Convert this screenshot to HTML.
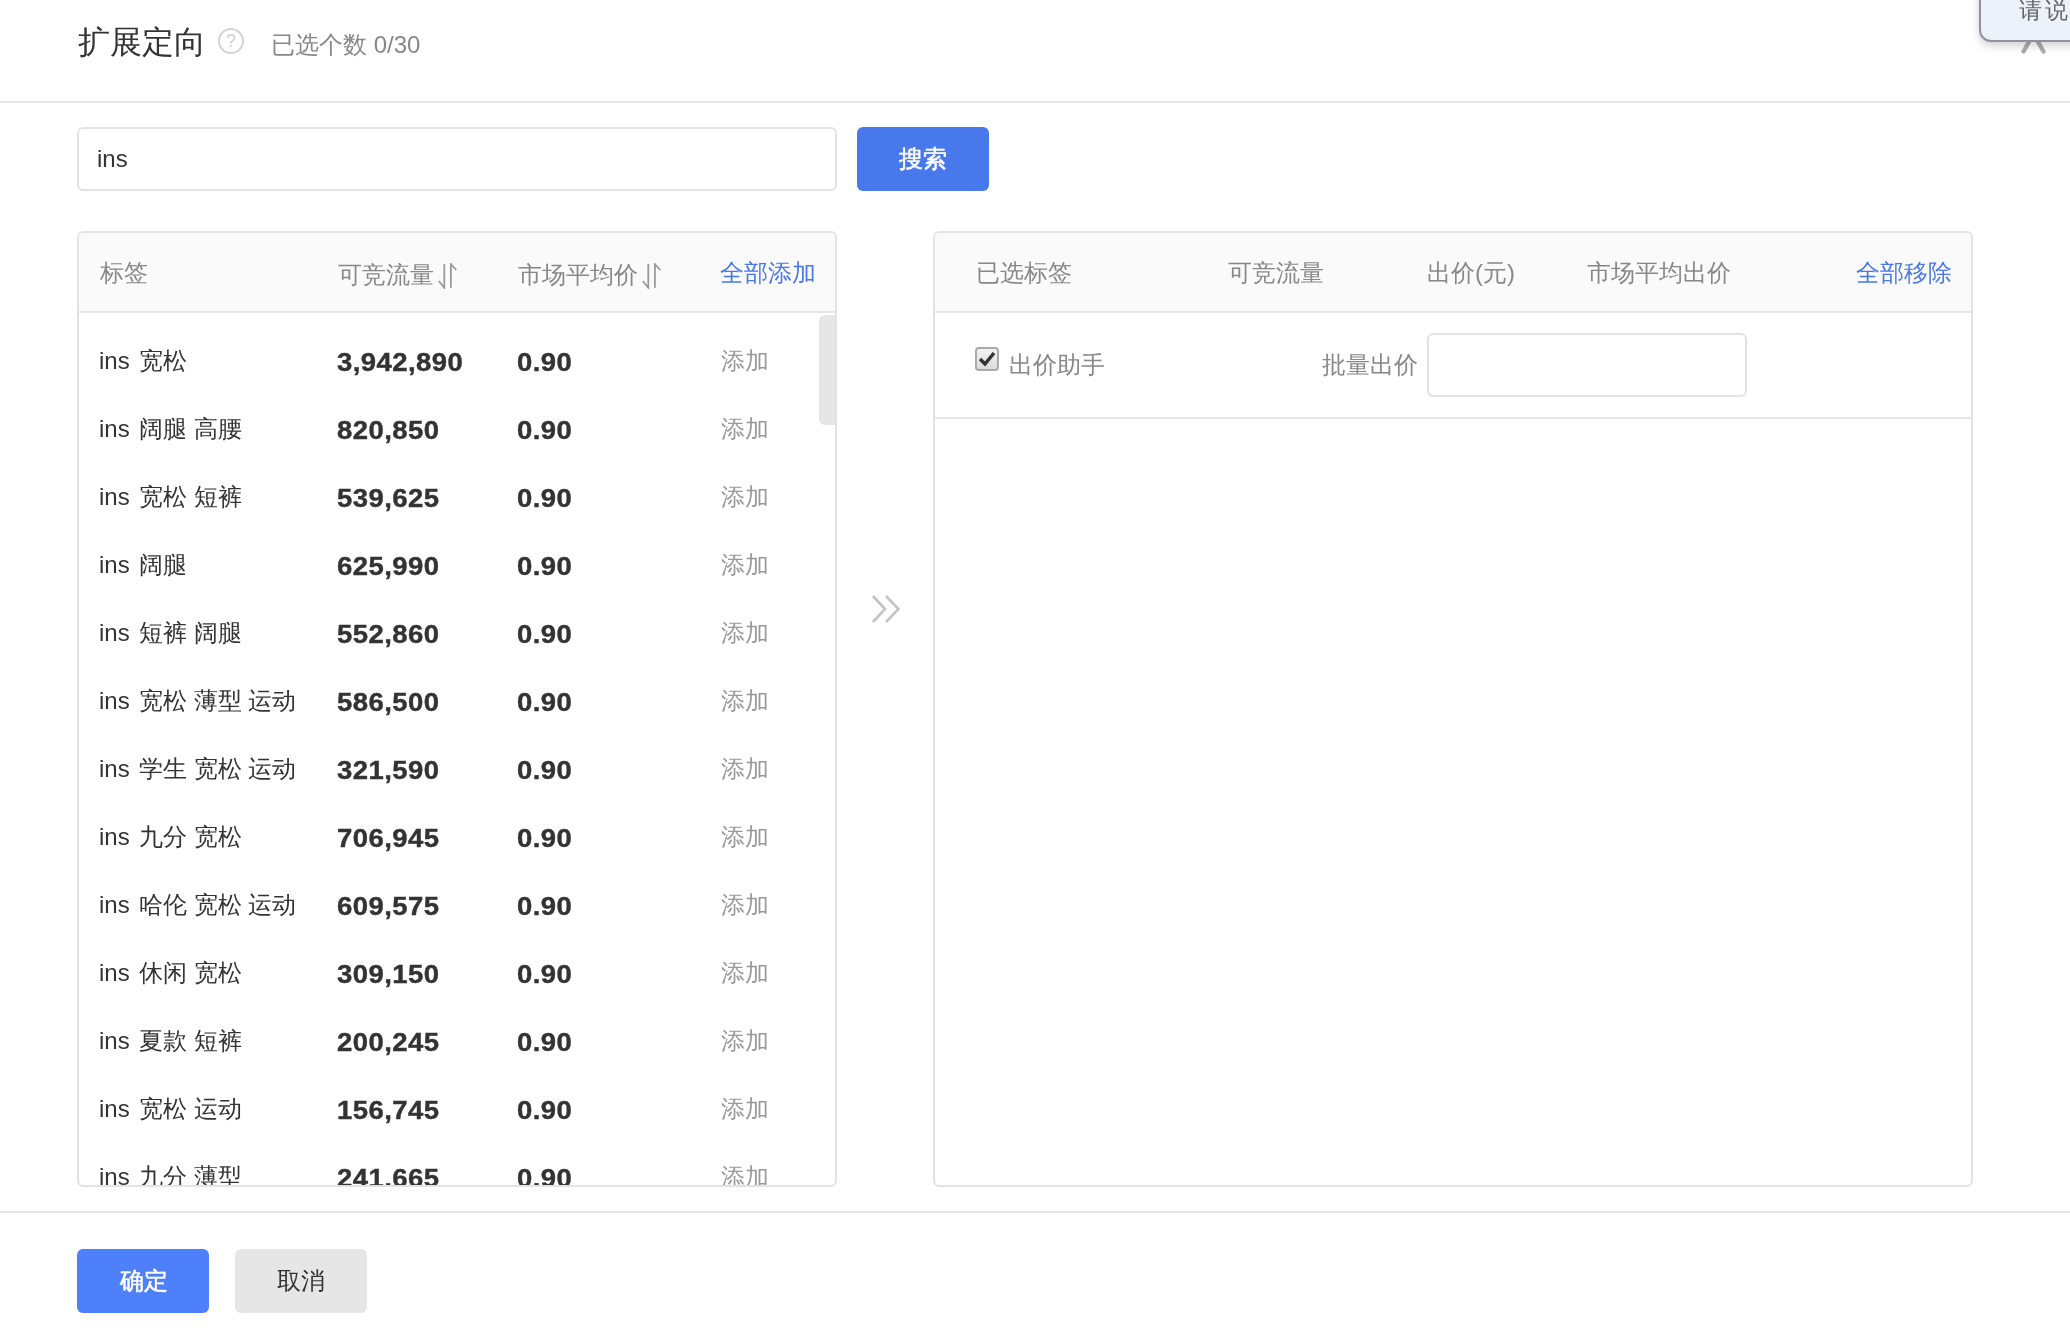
<!DOCTYPE html>
<html><head><meta charset="utf-8">
<style>
html,body{margin:0;padding:0;}
body{width:2070px;height:1328px;position:relative;overflow:hidden;background:#fff;font-family:"Liberation Sans",sans-serif;color:#333;}
.a{position:absolute;white-space:nowrap;line-height:1;}
.hr{position:absolute;left:0;width:2070px;height:2px;background:#e6e6e6;}
.box{position:absolute;box-sizing:border-box;border:2px solid #e3e3e3;border-radius:6px;}
.btn{position:absolute;box-sizing:border-box;border-radius:6px;text-align:center;font-size:24px;}
.panel{position:absolute;box-sizing:border-box;border:2px solid #e3e3e3;border-radius:6px;overflow:hidden;background:#fff;}
.phead{position:absolute;left:0;top:0;right:0;height:78px;background:#fafafa;border-bottom:2px solid #e6e6e6;}
.ph{position:absolute;top:28px;font-size:24px;line-height:1;color:#888;white-space:nowrap;}
.blue{color:#4a78e6;}
.row{position:absolute;left:0;right:0;height:68px;font-size:24px;line-height:1;white-space:nowrap;}
.row>span{position:absolute;top:3px;}
.w{font-style:normal;margin-right:2.5px;}
.c1{left:20px;color:#333;}
.c2{left:258px;}
.c3{left:438px;}
.c4{left:642px;color:#999;}
.num{font-weight:bold;font-size:25px;letter-spacing:0.4px;color:#333;top:4px !important;transform:scaleX(1.1);transform-origin:0 0;-webkit-text-stroke:0.4px #333;}
.sort{position:absolute;top:30px;width:20px;height:26px;}
.lay{will-change:transform;}</style></head><body><div class="lay" style="position:absolute;left:0;top:0;width:2070px;height:1328px;">

<div class="a" id="title" style="left:78px;top:26px;font-size:32px;color:#333;">扩展定向</div>
<div class="a" style="left:218px;top:28px;width:22px;height:22px;border:2px solid #d4d4d4;border-radius:50%;color:#ccc;font-size:18px;text-align:center;line-height:22px;">?</div>
<div class="a" style="left:271px;top:33px;font-size:24px;color:#888;">已选个数 0/30</div>

<div class="hr" style="top:101px;"></div>

<div class="box" style="left:77px;top:127px;width:760px;height:64px;"></div>
<div class="a" style="left:97px;top:147px;font-size:24px;color:#333;">ins</div>
<div class="btn" style="left:857px;top:127px;width:132px;height:64px;background:#4879ec;color:#fff;line-height:64px;-webkit-text-stroke:0.5px #fff;">搜索</div>

<!-- left panel -->
<div class="panel" style="left:77px;top:231px;width:760px;height:956px;">
  <div class="phead">
    <div class="ph" style="left:21px;">标签</div>
    <div class="ph" style="left:259px;top:30px;">可竞流量</div>
    <svg class="sort" style="left:359px;" viewBox="0 0 20 26"><path d="M6.3 1V24.8L0.8 18M12.9 24.8V1.2L18.3 7" fill="none" stroke="#9a9a9a" stroke-width="1.8"/></svg>
    <div class="ph" style="left:439px;top:30px;">市场平均价</div>
    <svg class="sort" style="left:563px;" viewBox="0 0 20 26"><path d="M6.3 1V24.8L0.8 18M12.9 24.8V1.2L18.3 7" fill="none" stroke="#9a9a9a" stroke-width="1.8"/></svg>
    <div class="ph blue" style="left:641px;top:28px;">全部添加</div>
  </div>
<div class="row" style="top:113px;"><span class="c1"><em class="w">ins</em> 宽松</span><span class="c2 num">3,942,890</span><span class="c3 num">0.90</span><span class="c4">添加</span></div>
<div class="row" style="top:181px;"><span class="c1"><em class="w">ins</em> 阔腿 高腰</span><span class="c2 num">820,850</span><span class="c3 num">0.90</span><span class="c4">添加</span></div>
<div class="row" style="top:249px;"><span class="c1"><em class="w">ins</em> 宽松 短裤</span><span class="c2 num">539,625</span><span class="c3 num">0.90</span><span class="c4">添加</span></div>
<div class="row" style="top:317px;"><span class="c1"><em class="w">ins</em> 阔腿</span><span class="c2 num">625,990</span><span class="c3 num">0.90</span><span class="c4">添加</span></div>
<div class="row" style="top:385px;"><span class="c1"><em class="w">ins</em> 短裤 阔腿</span><span class="c2 num">552,860</span><span class="c3 num">0.90</span><span class="c4">添加</span></div>
<div class="row" style="top:453px;"><span class="c1"><em class="w">ins</em> 宽松 薄型 运动</span><span class="c2 num">586,500</span><span class="c3 num">0.90</span><span class="c4">添加</span></div>
<div class="row" style="top:521px;"><span class="c1"><em class="w">ins</em> 学生 宽松 运动</span><span class="c2 num">321,590</span><span class="c3 num">0.90</span><span class="c4">添加</span></div>
<div class="row" style="top:589px;"><span class="c1"><em class="w">ins</em> 九分 宽松</span><span class="c2 num">706,945</span><span class="c3 num">0.90</span><span class="c4">添加</span></div>
<div class="row" style="top:657px;"><span class="c1"><em class="w">ins</em> 哈伦 宽松 运动</span><span class="c2 num">609,575</span><span class="c3 num">0.90</span><span class="c4">添加</span></div>
<div class="row" style="top:725px;"><span class="c1"><em class="w">ins</em> 休闲 宽松</span><span class="c2 num">309,150</span><span class="c3 num">0.90</span><span class="c4">添加</span></div>
<div class="row" style="top:793px;"><span class="c1"><em class="w">ins</em> 夏款 短裤</span><span class="c2 num">200,245</span><span class="c3 num">0.90</span><span class="c4">添加</span></div>
<div class="row" style="top:861px;"><span class="c1"><em class="w">ins</em> 宽松 运动</span><span class="c2 num">156,745</span><span class="c3 num">0.90</span><span class="c4">添加</span></div>
<div class="row" style="top:929px;"><span class="c1"><em class="w">ins</em> 九分 薄型</span><span class="c2 num">241,665</span><span class="c3 num">0.90</span><span class="c4">添加</span></div>
  <div style="position:absolute;left:740px;top:82px;width:16px;height:110px;background:#e6e6e9;border-radius:6px 0 0 6px;"></div>
</div>

<!-- arrows -->
<svg class="a" style="left:869px;top:593px;" width="36" height="34" viewBox="0 0 36 34"><path d="M4 3L16 16L4 29M17 3L29.5 16L17 29" fill="none" stroke="#c4c4c4" stroke-width="2.6"/></svg>

<!-- right panel -->
<div class="panel" style="left:933px;top:231px;width:1040px;height:956px;">
  <div class="phead">
    <div class="ph" style="left:41px;">已选标签</div>
    <div class="ph" style="left:293px;">可竞流量</div>
    <div class="ph" style="left:492px;">出价(元)</div>
    <div class="ph" style="left:652px;">市场平均出价</div>
    <div class="ph blue" style="left:921px;">全部移除</div>
  </div>
  <div style="position:absolute;left:0;right:0;top:80px;height:104px;border-bottom:2px solid #e6e6e6;">
    <div style="position:absolute;left:40px;top:34px;width:24px;height:24px;box-sizing:border-box;border:2px solid #aaa;border-radius:4px;background:linear-gradient(#f2f2f2,#dcdcdc);"></div>
    <svg style="position:absolute;left:42px;top:36px;" width="20" height="20" viewBox="0 0 20 20"><path d="M3 10L8 15L17 4" fill="none" stroke="#333" stroke-width="3.5"/></svg>
    <div class="ph" style="left:74px;top:40px;">出价助手</div>
    <div class="ph" style="left:387px;top:40px;">批量出价</div>
    <div style="position:absolute;left:492px;top:20px;width:320px;height:64px;box-sizing:border-box;border:2px solid #e3e3e3;border-radius:6px;"></div>
  </div>
</div>

<div class="hr" style="top:1211px;"></div>
<div class="btn" style="left:77px;top:1249px;width:132px;height:64px;background:#4f80fc;color:#fff;line-height:64px;-webkit-text-stroke:0.5px #fff;text-indent:2px;">确定</div>
<div class="btn" style="left:235px;top:1249px;width:132px;height:64px;background:#e6e6e6;color:#333;line-height:64px;">取消</div>

<!-- close X and tooltip -->
<svg class="a" style="left:2013px;top:10px;" width="41" height="48" viewBox="0 0 41 48"><path d="M10.5 6L30.5 41.5M30.5 6L10.5 41.5" fill="none" stroke="#acacac" stroke-width="4.3" stroke-linecap="round"/></svg>
<div class="a" style="left:1979px;top:-20px;width:140px;height:62px;box-sizing:border-box;border:2px solid #8f9399;border-radius:12px;background:#edf1f9;box-shadow:0 4px 8px rgba(0,0,0,0.18);"></div>
<div class="a" style="left:2019px;top:-1px;font-size:23px;letter-spacing:3px;color:#666;">请说</div>

</div></body></html>
